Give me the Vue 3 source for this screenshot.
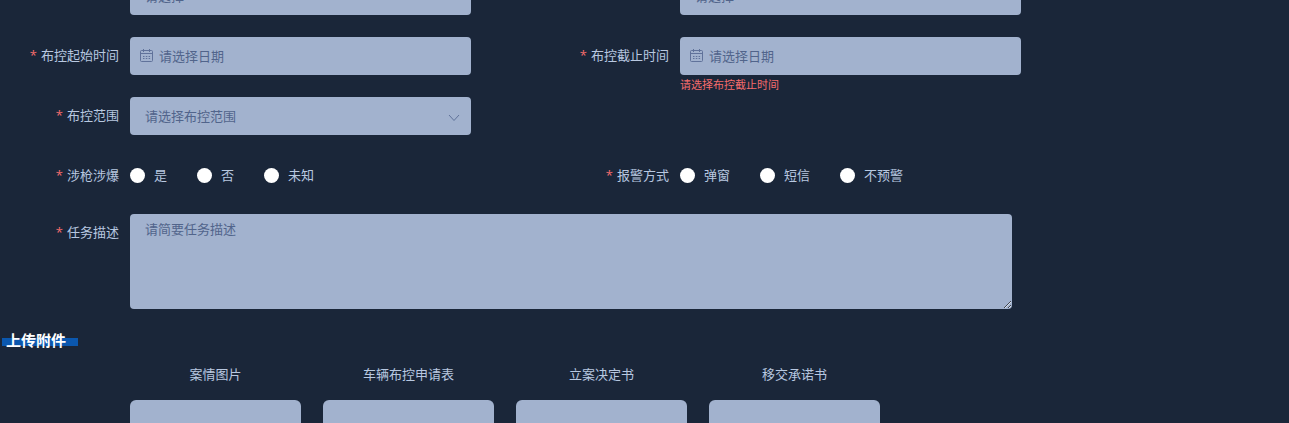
<script setup>
import { ref } from 'vue'

const topic = ref('')
const level = ref('')
const startTime = ref('')
const endTime = ref('')
const range = ref('')
const gun = ref('')
const alarm = ref('')
const description = ref('')

const gunOptions = ['是', '否', '未知']
const alarmOptions = ['弹窗', '短信', '不预警']
const uploads = ['案情图片', '车辆布控申请表', '立案决定书', '移交承诺书']
</script>

<template>
  <main class="page">
    <form class="form" @submit.prevent>
      <div class="item">
        <span class="label"></span>
        <div class="control">
          <select v-model="topic" class="field" aria-label="请选择"><option value="">请选择</option></select>
        </div>
      </div>
      <div class="item">
        <span class="label"></span>
        <div class="control">
          <select v-model="level" class="field" aria-label="请选择"><option value="">请选择</option></select>
        </div>
      </div>

      <div class="item">
        <label class="label required" for="start">布控起始时间</label>
        <div class="control">
          <svg class="calendar" viewBox="0 0 13 13" aria-hidden="true">
            <rect x=".5" y="1.5" width="12" height="11" rx="1" />
            <path d="M.5 4.500h12M3.500 0v3M9.500 0v3" />
            <path d="M3 7.500h1.500M5.800 7.500h1.500M8.600 7.500h1.500M3 9.500h1.500M5.800 9.500h1.500M8.600 9.500h1.500" />
          </svg>
          <input id="start" v-model="startTime" class="field date" type="text" placeholder="请选择日期" />
        </div>
      </div>
      <div class="item">
        <label class="label required" for="end">布控截止时间</label>
        <div class="control">
          <svg class="calendar" viewBox="0 0 13 13" aria-hidden="true">
            <rect x=".5" y="1.5" width="12" height="11" rx="1" />
            <path d="M.5 4.500h12M3.500 0v3M9.500 0v3" />
            <path d="M3 7.500h1.500M5.800 7.500h1.500M8.600 7.500h1.500M3 9.500h1.500M5.800 9.500h1.500M8.600 9.500h1.500" />
          </svg>
          <input id="end" v-model="endTime" class="field date" type="text" placeholder="请选择日期" aria-describedby="end-error" />
          <p id="end-error" class="error">请选择布控截止时间</p>
        </div>
      </div>

      <div class="item row-start">
        <label class="label required" for="range">布控范围</label>
        <div class="control">
          <select id="range" v-model="range" class="field"><option value="">请选择布控范围</option></select>
          <svg class="chevron" viewBox="0 0 12 8" aria-hidden="true"><path d="M1 1l5 5.500L11 1" /></svg>
        </div>
      </div>

      <div class="item row-start" role="radiogroup" aria-labelledby="gun-label">
        <span id="gun-label" class="label required">涉枪涉爆</span>
        <div class="radios">
          <label v-for="o in gunOptions" :key="o" class="radio">
            <input v-model="gun" type="radio" name="gun" :value="o" />{{ o }}
          </label>
        </div>
      </div>
      <div class="item" role="radiogroup" aria-labelledby="alarm-label">
        <span id="alarm-label" class="label required">报警方式</span>
        <div class="radios">
          <label v-for="o in alarmOptions" :key="o" class="radio">
            <input v-model="alarm" type="radio" name="alarm" :value="o" />{{ o }}
          </label>
        </div>
      </div>

      <div class="item wide">
        <label class="label required" for="desc">任务描述</label>
        <textarea id="desc" v-model="description" class="field area" placeholder="请简要任务描述"></textarea>
      </div>
    </form>

    <h2 class="title">上传附件</h2>
    <div class="uploads">
      <label v-for="u in uploads" :key="u" class="upload">
        <span>{{ u }}</span>
        <span class="box"><input type="file" /></span>
      </label>
    </div>
  </main>
</template>

<style>
body {
  margin: 0;
  background: #1a2639;
}
</style>

<style scoped>
.page {
  height: 100vh;
  overflow: hidden;
  box-sizing: border-box;
  background: #1a2639;
  color: #b8c8e0;
  font: 13px/20px "Noto Sans CJK SC", sans-serif;
}
.form {
  display: grid;
  grid-template-columns: repeat(2, 1fr);
  row-gap: 22px;
  width: 100%;
  max-width: 1100px;
  margin-top: -23px;
}
.item {
  display: flex;
  align-items: flex-start;
  gap: 11px;
  min-height: 38px;
}
.row-start {
  grid-column-start: 1;
}
.wide {
  grid-column: 1 / -1;
  margin-top: -3px;
}
.label {
  flex: 0 0 119px;
  line-height: 36px;
  text-align: right;
}
.required::before {
  content: "*";
  margin-right: 4px;
  color: #f56c6c;
  font-family: "Open Sans", sans-serif;
}
.control {
  position: relative;
  flex: 0 1 341px;
  height: 38px;
}
.field {
  display: block;
  box-sizing: border-box;
  width: 100%;
  height: 38px;
  margin: 0;
  padding: 0 15px;
  border: 0;
  border-radius: 4px;
  outline: none;
  background: #a2b2ce;
  color: #51648b;
  font: inherit;
  appearance: none;
}
.field::placeholder {
  color: #51648b;
  opacity: 1;
}
.date {
  padding: 0 15px 2px 29px;
}
.calendar {
  position: absolute;
  top: 12px;
  left: 10px;
  width: 13px;
  height: 13px;
  fill: none;
  stroke: #60729a;
}
.chevron {
  position: absolute;
  top: 17px;
  right: 11px;
  width: 12px;
  height: 8px;
  fill: none;
  stroke: #60729a;
  pointer-events: none;
}
.error {
  margin: 1px 0 0;
  color: #f56c6c;
  font-size: 11px;
  line-height: 16px;
}
.radios {
  display: flex;
  gap: 30px;
  line-height: 36px;
}
.radio {
  display: flex;
  align-items: center;
  gap: 9px;
}
.radio input {
  width: 15px;
  height: 15px;
  margin: 0;
  border-radius: 50%;
  background: #fff;
  appearance: none;
}
.radio input:checked {
  border: 4px solid #0b57ae;
}
.area {
  flex: 0 1 882px;
  height: 95px;
  padding: 5px 15px;
  resize: both;
}
.title {
  width: 72px;
  margin: 19px 0 0 2px;
  padding-left: 4px;
  background: linear-gradient(#0b57ae, #0b57ae) 0 10px / 100% 8px no-repeat;
  color: #fff;
  font-size: 15px;
  line-height: 24px;
}
.uploads {
  display: flex;
  gap: 22px;
  margin: 12px 0 0 130px;
}
.upload {
  flex: 0 1 171px;
  text-align: center;
}
.upload > span {
  display: block;
}
.upload .box {
  height: 170px;
  margin-top: 16px;
  border-radius: 6px;
  background: #a2b2ce;
}
.box input {
  width: 100%;
  height: 100%;
  opacity: 0;
  cursor: pointer;
}
</style>
